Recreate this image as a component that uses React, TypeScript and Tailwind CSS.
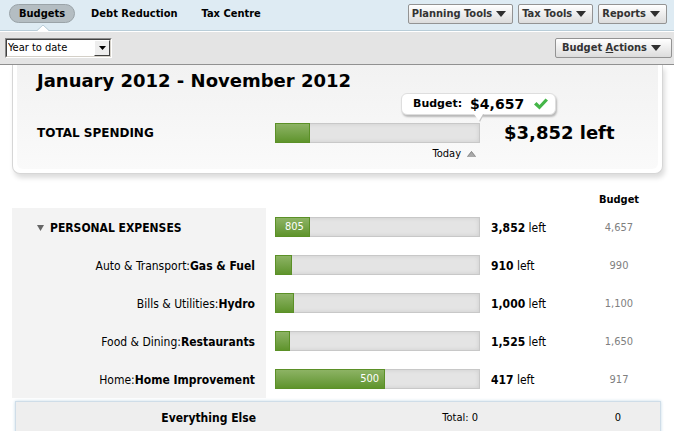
import React from "react";

const CONDENSED = "font-['DejaVu_Sans_Condensed','DejaVu_Sans',sans-serif]";
const WIDE = "font-['DejaVu_Sans',sans-serif]";

function DownArrow() {
  return (
    <svg width="10" height="6" viewBox="0 0 10 6" aria-hidden="true">
      <path d="M0 0h10L5 6z" fill="#2f2f2f" />
    </svg>
  );
}

function MenuButton({ children, wide = false }: { children: React.ReactNode; wide?: boolean }) {
  return (
    <button
      type="button"
      className={`flex h-5 items-center gap-1 whitespace-nowrap rounded-xs border border-[#939393] bg-linear-to-b from-white to-[#dcdcdc] text-[11px] font-bold text-[#333] ${wide ? "pr-2.5 pl-1.5" : "pr-1.5 pl-[3px]"}`}
    >
      <span>{children}</span>
      <DownArrow />
    </button>
  );
}

function Bar({ percent, value }: { percent: number; value?: string }) {
  return (
    <div className="h-5 w-[205px] border border-[#c8c8c8] bg-[#e4e4e4] shadow-[inset_0_0_4px_#cccccc]">
      <div
        className="-mt-px -ml-px flex h-5 items-center justify-end border border-[#5b9027] bg-linear-to-b from-[#8db364] to-[#5f942b] pr-[5px] text-[11px] text-white"
        style={{ width: `${percent}%` }}
      >
        {value}
      </div>
    </div>
  );
}

const rows = [
  { group: "Auto & Transport", name: "Gas & Fuel", percent: 8.4, left: "910", budget: "990" },
  { group: "Bills & Utilities", name: "Hydro", percent: 9.4, left: "1,000", budget: "1,100" },
  { group: "Food & Dining", name: "Restaurants", percent: 7.4, left: "1,525", budget: "1,650" },
  { group: "Home", name: "Home Improvement", percent: 54.2, value: "500", left: "417", budget: "917" },
];

export default function App() {
  return (
    <div className={`${CONDENSED} min-h-screen overflow-hidden bg-white text-[12px] text-black`}>
      <header className="flex h-8 items-start justify-between border-b border-white bg-[#deebf3] shadow-[inset_0_-1px_0_#b9cdd8]">
        <nav className="flex h-full items-start gap-4 pt-1 pl-[9px] text-[11px] font-bold">
          <div className="relative h-[27px]">
            <a
              href="#budgets"
              className="flex h-[19px] items-center rounded-full border border-[#9aa3a8] bg-[#b4bdc2] px-[9px] pt-0.5"
            >
              Budgets
            </a>
            <svg className="absolute bottom-0 left-7" width="12" height="6" viewBox="0 0 12 6" aria-hidden="true">
              <path d="M0 6L6 0l6 6z" fill="#fff" />
              <path d="M0 5.500L6 0l6 5.500" fill="none" stroke="#b9cdd8" />
            </svg>
          </div>
          <a href="#debt" className="flex h-[19px] items-center pt-0.5">Debt Reduction</a>
          <a href="#tax" className="ml-2 flex h-[19px] items-center pt-0.5">Tax Centre</a>
        </nav>
        <div className="flex gap-[5px] pt-1 pr-[7px]">
          <MenuButton>Planning Tools</MenuButton>
          <MenuButton>Tax Tools</MenuButton>
          <MenuButton>Reports</MenuButton>
        </div>
      </header>

      <div className="flex h-[33px] items-center justify-between border-b border-[#8f8f8f] bg-[#e4e4e4] pr-[2px] pl-[5px]">
        <div className="relative w-[107px] border border-t-[#8a8a8a] border-r-white border-b-white border-l-[#8a8a8a]">
          <select
            aria-label="Date range"
            className="block h-[18px] w-full appearance-none border border-t-[#404040] border-r-[#d4d0c8] border-b-[#d4d0c8] border-l-[#404040] bg-white pl-px text-[11px]"
          >
            <option>Year to date</option>
          </select>
          <span className="pointer-events-none absolute top-px right-px flex h-4 w-4 items-center justify-center border border-t-white border-r-[#404040] border-b-[#404040] border-l-white bg-[#eeeeee]">
            <svg width="7" height="4" viewBox="0 0 7 4" aria-hidden="true">
              <path d="M0 0h7L3.500 4z" fill="#000" />
            </svg>
          </span>
        </div>
        <MenuButton wide>
          Budget <u>A</u>ctions
        </MenuButton>
      </div>

      <main className="px-3">
        <section className="mr-[-1px] rounded-b-lg border border-t-0 border-[#d6d6d6] bg-white px-1 pb-1 shadow-[2px_4px_5px_#dddddd]">
          <div className="h-[104px] rounded-b-md bg-linear-to-b from-[#f2f2f2] to-[#fafafa] pl-5">
            <h1 className={`${WIDE} pt-1 text-[18px] leading-6 font-bold`}>January 2012 - November 2012</h1>
            <div className="flex pt-[30px]">
              <h2 className={`${WIDE} w-[238px] text-[12px] leading-5 font-bold`}>TOTAL SPENDING</h2>
              <div className="relative w-[205px]">
                <Bar percent={17.2} />
                <div className="pt-[3px] pr-1 text-right text-[11px] leading-4">
                  Today
                  <svg className="ml-1.5 inline" width="9" height="6" viewBox="0 0 9 6" aria-hidden="true">
                    <path d="M0 6L4.500 0 9 6z" fill="#aaa" />
                    <path d="M.5 5.500L4.500.5l4 5" fill="none" stroke="#777" strokeWidth=".7" />
                  </svg>
                </div>
                <div className={`${WIDE} absolute bottom-full left-[126px] mb-2 flex h-[22px] w-[155px] items-center rounded-md border border-[#dedede] bg-white pl-[11px] font-bold shadow-[1px_2px_2px_#b8b8b8]`}>
                  <span className="text-[11px]">Budget:</span>
                  <span className="ml-2 text-[14px]">$4,657</span>
                  <svg className="ml-2.5" width="14" height="12" viewBox="0 0 14 12" aria-hidden="true">
                    <path d="M0 6.500L2.500 4l3 3L11.500.5 14 2.500 5.500 11.500z" fill="#45b649" />
                  </svg>
                  <svg className="absolute top-5 left-[72px]" width="10" height="8" viewBox="0 0 10 8" aria-hidden="true">
                    <path d="M1 0h9L6 8z" fill="#c4c4c4" />
                    <path d="M0 0h9L5 7z" fill="#fff" />
                  </svg>
                </div>
              </div>
              <div className={`${WIDE} pl-6 text-[18px] leading-5 font-bold`}>$3,852 left</div>
            </div>
          </div>
        </section>

        <table className="mt-4 w-full table-fixed border-collapse">
          <thead>
            <tr className="h-[18px]">
              <th className="w-[254px]" />
              <th className="w-[225px]" />
              <th />
              <th scope="col" className="w-[88px] p-0 pt-0.5 pl-0.5 text-[11px] leading-4 font-bold">Budget</th>
            </tr>
          </thead>
          <tbody>
            <tr className="h-[38px]">
              <th scope="row" className="bg-[#f3f3f3] p-0 pt-0.5 pl-[25px] text-left font-bold">
                <button type="button" className="flex items-center gap-1.5">
                  <svg width="7" height="6" viewBox="0 0 7 6" aria-hidden="true">
                    <path d="M0 0h7L3.500 6z" fill="#666" />
                  </svg>
                  PERSONAL EXPENSES
                </button>
              </th>
              <td className="p-0 pl-[9px]"><Bar percent={17.2} value="805" /></td>
              <td className="p-0 pt-0.5"><b>3,852</b> left</td>
              <td className="p-0 pt-0.5 pl-0.5 text-center text-[11px] text-[#808080]">4,657</td>
            </tr>
            {rows.map((r) => (
              <tr key={r.name} className="h-[38px]">
                <th scope="row" className="bg-[#f3f3f3] p-0 pt-0.5 pr-[11px] text-right font-normal">
                  {r.group}:<b>{r.name}</b>
                </th>
                <td className="p-0 pl-[9px]"><Bar percent={r.percent} value={r.value} /></td>
                <td className="p-0 pt-0.5"><b>{r.left}</b> left</td>
                <td className="p-0 pt-0.5 pl-0.5 text-center text-[11px] text-[#808080]">{r.budget}</td>
              </tr>
            ))}
          </tbody>
        </table>

        <section className="mt-[3px] mr-px ml-[3px] flex h-10 items-center border border-[#cfdde8] bg-[#eeeeee] pb-1.5 shadow-[0_0_3px_#c5dbe8]">
          <h3 className="w-60 text-right font-bold">Everything Else</h3>
          <span className="flex-1 pr-[98px] text-right text-[11px]">Total: 0</span>
          <span className="w-[84px] text-center text-[11px]">0</span>
        </section>
      </main>
    </div>
  );
}
